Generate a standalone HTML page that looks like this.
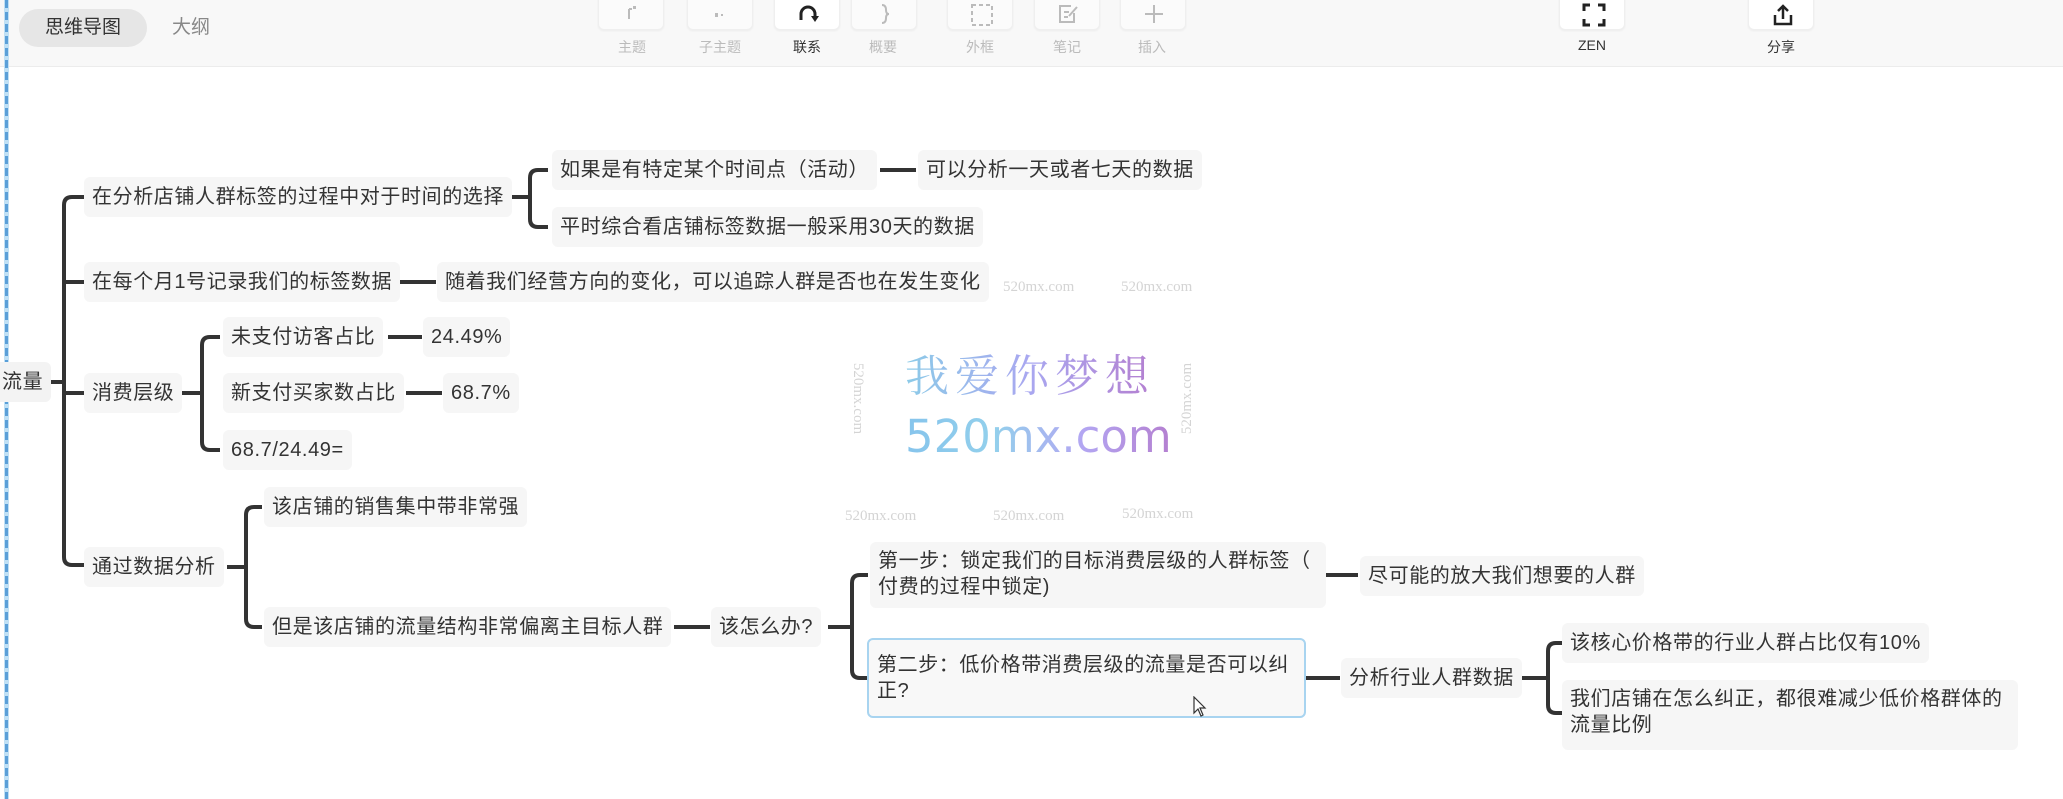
<!DOCTYPE html>
<html><head><meta charset="utf-8">
<style>
*{margin:0;padding:0;box-sizing:border-box}
html,body{width:2063px;height:799px;overflow:hidden;background:#fff;font-family:"Liberation Sans","Noto Sans CJK SC",sans-serif;}
.hdr{position:absolute;left:0;top:0;width:2063px;height:67px;background:#f8f8f8;border-bottom:1px solid #ececec}
.pill{position:absolute;left:19px;top:9px;width:128px;height:38px;border-radius:19px;background:#e6e6e6;color:#333;font-size:19px;line-height:38px;text-align:center}
.tab2{position:absolute;left:172px;top:9px;height:38px;line-height:38px;color:#888;font-size:19px}
.btn{position:absolute;top:-6px;width:66px;height:36px;background:#fbfbfb;border:1px solid #efefef;border-radius:6px;box-shadow:0 1px 2px rgba(0,0,0,.05)}
.btn svg{position:absolute;left:22px;top:8px}
.lbl{position:absolute;top:37px;width:80px;text-align:center;font-size:14px;color:#bbb}
.vline{position:absolute;left:4px;top:0;width:5px;height:799px;background:repeating-linear-gradient(#5a9fd8 0 8px,#bfe0f5 8px 12px);border-left:1px solid #bfe0f5;border-right:1px solid #bfe0f5}
.n{position:absolute;height:40px;line-height:40px;padding:0 8px;background:#f6f6f6;border-radius:6px;color:#333;font-size:20px;letter-spacing:0.6px;white-space:nowrap}
.m{position:absolute;padding:6px 8px;background:#f6f6f6;border-radius:6px;color:#333;font-size:20px;letter-spacing:0.6px;line-height:26px;line-break:anywhere;word-break:break-all}
.wm{position:absolute;color:#d4d4d4;font-family:"Liberation Serif",serif;font-size:15px;white-space:nowrap}
</style></head><body>
<div class="hdr">
 <div class="pill">思维导图</div>
 <div class="tab2">大纲</div>
 <div class="btn" style="left:598px"><svg width="22" height="22"><path d="M8 6 V16 M8 6 H11" stroke="#bbb" stroke-width="2" fill="none"/><rect x="12" y="3" width="3" height="3" fill="#bbb"/></svg></div>
 <div class="btn" style="left:687px"><svg width="22" height="22"><rect x="5" y="10" width="3" height="4" fill="#bbb"/><rect x="11" y="11" width="2" height="2" fill="#bbb"/></svg></div>
 <div class="btn" style="left:774px;background:#fff"><svg width="24" height="22"><path d="M4 17 V11 A7 7 0 0 1 18 11 V15" stroke="#222" stroke-width="3" fill="none"/><path d="M14 13 L18 19 L22 13 Z" fill="#222"/></svg></div>
 <div class="btn" style="left:851px"><svg width="22" height="22"><path d="M8 2 Q12 2 12 7 Q12 11 15 11 Q12 11 12 15 Q12 20 8 20" stroke="#bbb" stroke-width="2" fill="none"/></svg></div>
 <div class="btn" style="left:947px"><svg width="24" height="24"><rect x="2" y="2" width="20" height="20" stroke="#bbb" stroke-width="2" stroke-dasharray="4 3" fill="none"/></svg></div>
 <div class="btn" style="left:1034px"><svg width="24" height="22"><path d="M14 3 H3 V19 H17 V10" stroke="#bbb" stroke-width="2" fill="none"/><path d="M7 9 H12 M7 14 H11 M12 13 L20 4" stroke="#bbb" stroke-width="2"/></svg></div>
 <div class="btn" style="left:1120px"><svg width="22" height="22"><path d="M11 2 V20 M2 11 H20" stroke="#bbb" stroke-width="2"/></svg></div>
 <div class="btn" style="left:1559px;background:#fff"><svg width="24" height="24"><path d="M2 8 V2 H8 M16 2 H22 V8 M22 16 V22 H16 M8 22 H2 V16" stroke="#222" stroke-width="3" fill="none"/></svg></div>
 <div class="btn" style="left:1748px;background:#fff"><svg width="24" height="24"><path d="M4 12 V21 H20 V12" stroke="#222" stroke-width="2.5" fill="none"/><path d="M12 16 V3 M7 8 L12 3 L17 8" stroke="#222" stroke-width="2.5" fill="none"/></svg></div>
 <div class="lbl" style="left:592px">主题</div>
 <div class="lbl" style="left:680px">子主题</div>
 <div class="lbl" style="left:767px;color:#333">联系</div>
 <div class="lbl" style="left:843px">概要</div>
 <div class="lbl" style="left:940px">外框</div>
 <div class="lbl" style="left:1027px">笔记</div>
 <div class="lbl" style="left:1112px">插入</div>
 <div class="lbl" style="left:1552px;color:#333">ZEN</div>
 <div class="lbl" style="left:1741px;color:#333">分享</div>
</div>
<div class="vline"></div>

<svg width="2063" height="799" style="position:absolute;left:0;top:0" fill="none" stroke="#333" stroke-width="4">
 <path d="M40 382 H64"/>
 <path d="M84 197 H72 Q64 197 64 205 V557 Q64 565 72 565 H84"/>
 <path d="M64 282 H84 M64 393 H84"/>
 <path d="M512 197 H530"/>
 <path d="M548 170 H538 Q530 170 530 178 V219 Q530 227 538 227 H548"/>
 <path d="M880 170 H916"/>
 <path d="M400 282 H436"/>
 <path d="M180 393 H202"/>
 <path d="M220 337 H210 Q202 337 202 345 V442 Q202 450 210 450 H220"/>
 <path d="M388 337 H422 M406 393 H442"/>
 <path d="M227 567 H246"/>
 <path d="M262 507 H254 Q246 507 246 515 V619 Q246 627 254 627 H262"/>
 <path d="M674 627 H710 M828 627 H852"/>
 <path d="M868 575 H860 Q852 575 852 583 V670 Q852 678 860 678 H868"/>
 <path d="M1322 575 H1358 M1306 678 H1340"/>
 <path d="M1522 678 H1548"/>
 <path d="M1562 643 H1556 Q1548 643 1548 651 V705 Q1548 713 1556 713 H1562"/>
</svg>

<div class="n" style="left:-6px;top:362px;background:#f3f3f3">流量</div>
<div class="n" style="left:84px;top:177px">在分析店铺人群标签的过程中对于时间的选择</div>
<div class="n" style="left:84px;top:262px">在每个月1号记录我们的标签数据</div>
<div class="n" style="left:84px;top:373px">消费层级</div>
<div class="n" style="left:84px;top:547px">通过数据分析</div>
<div class="n" style="left:552px;top:150px">如果是有特定某个时间点（活动）</div>
<div class="n" style="left:552px;top:207px">平时综合看店铺标签数据一般采用30天的数据</div>
<div class="n" style="left:918px;top:150px">可以分析一天或者七天的数据</div>
<div class="n" style="left:437px;top:262px">随着我们经营方向的变化，可以追踪人群是否也在发生变化</div>
<div class="n" style="left:223px;top:317px">未支付访客占比</div>
<div class="n" style="left:423px;top:317px">24.49%</div>
<div class="n" style="left:223px;top:373px">新支付买家数占比</div>
<div class="n" style="left:443px;top:373px">68.7%</div>
<div class="n" style="left:223px;top:430px">68.7/24.49=</div>
<div class="n" style="left:264px;top:487px">该店铺的销售集中带非常强</div>
<div class="n" style="left:264px;top:607px">但是该店铺的流量结构非常偏离主目标人群</div>
<div class="n" style="left:711px;top:607px">该怎么办?</div>
<div class="m" style="left:870px;top:542px;width:456px;height:66px">第一步：锁定我们的目标消费层级的人群标签（付费的过程中锁定)</div>
<div class="n" style="left:1360px;top:556px">尽可能的放大我们想要的人群</div>
<div class="m" style="left:867px;top:638px;width:439px;height:80px;background:#f8f8f8;border:2px solid #a8d4f0;padding-top:12px">第二步：低价格带消费层级的流量是否可以纠正?</div>
<div class="n" style="left:1341px;top:658px">分析行业人群数据</div>
<div class="n" style="left:1562px;top:623px">该核心价格带的行业人群占比仅有10%</div>
<div class="m" style="left:1562px;top:680px;width:456px;height:70px">我们店铺在怎么纠正，都很难减少低价格群体的流量比例</div>

<div style="position:absolute;left:905px;top:340px;font-family:'Noto Serif CJK SC',serif;font-size:44px;letter-spacing:6px;white-space:nowrap;background:linear-gradient(90deg,#8ccbe8,#a9a7f0,#b47fd0);-webkit-background-clip:text;background-clip:text;color:transparent">我爱你梦想</div>
<div style="position:absolute;left:905px;top:410px;font-family:'DejaVu Sans',sans-serif;font-size:45px;white-space:nowrap;background:linear-gradient(90deg,#86c4ec,#93d0ec,#b3a6f2,#b47fd0);-webkit-background-clip:text;background-clip:text;color:transparent">520mx.com</div>
<div class="wm" style="left:1003px;top:279px">520mx.com</div>
<div class="wm" style="left:1121px;top:279px">520mx.com</div>
<div class="wm" style="left:845px;top:508px">520mx.com</div>
<div class="wm" style="left:993px;top:508px">520mx.com</div>
<div class="wm" style="left:1122px;top:506px">520mx.com</div>
<div class="wm" style="left:822px;top:390px;transform:rotate(90deg)">520mx.com</div>
<div class="wm" style="left:1152px;top:390px;transform:rotate(-90deg)">520mx.com</div>
<svg style="position:absolute;left:1193px;top:696px" width="14" height="22"><path d="M1 1 V17 L5 13 L8 20 L10 19 L7 12 L12 12 Z" fill="#fff" stroke="#333" stroke-width="1.2"/></svg>
</body></html>
